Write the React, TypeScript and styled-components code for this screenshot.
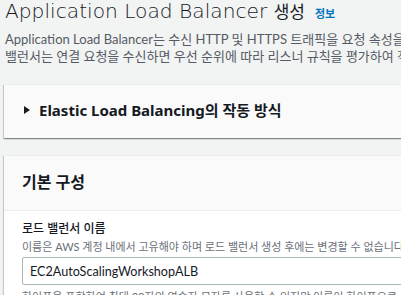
import React from "react";
import styled, { createGlobalStyle } from "styled-components";

const GlobalStyle = createGlobalStyle`
  html, body {
    margin: 0;
    padding: 0;
    background: #f2f3f3;
    overflow: hidden;
  }
  body {
    font-family: "Noto Sans", "Noto Sans CJK KR", sans-serif;
    color: #16191f;
  }
`;

const Page = styled.div`
  width: 760px;
  padding: 0 0 0 4px;
`;

const Header = styled.div`
  padding: 0 0 0 1px;
`;

const TitleRow = styled.div`
  display: flex;
  align-items: baseline;
  gap: 10px;
  height: 26px;
  margin-top: -2px;
  margin-bottom: 7px;
`;

const Title = styled.h1`
  margin: 0;
  font-family: "DejaVu Sans", "Noto Sans CJK KR", sans-serif;
  font-size: 20.2px;
  font-weight: 200;
  line-height: 26px;
  color: #16191f;
  white-space: nowrap;
`;

const TitleKo = styled.span`
  font-family: "Noto Sans CJK KR", sans-serif;
  font-size: 17px;
  font-weight: 400;
`;

const InfoLink = styled.a`
  font-size: 11px;
  font-weight: 700;
  color: #0073bb;
  text-decoration: none;
`;

const Desc = styled.p`
  margin: 0;
  font-family: Lato, "Noto Sans CJK KR", sans-serif;
  font-size: 13px;
  line-height: 17px;
  color: #545b64;
  white-space: nowrap;
`;

const Card = styled.section<{ $flat?: boolean }>`
  background: ${(p) => (p.$flat ? "#fafafa" : "#ffffff")};
  box-shadow: 0 1px 1px 0 rgba(0, 28, 36, 0.3), 1px 1px 1px 0 rgba(0, 28, 36, 0.15),
    -1px 1px 1px 0 rgba(0, 28, 36, 0.15);
  border-top: 1px solid #eaeded;
`;

const Gap = styled.div<{ $h: number }>`
  height: ${(p) => p.$h}px;
`;

const Expander = styled.div`
  display: flex;
  align-items: center;
  gap: 8px;
  height: 49px;
  padding: 0 0 4px 18px;
  font-size: 15px;
  font-weight: 700;
  color: #16191f;
`;

const Caret = styled.span`
  width: 0;
  height: 0;
  border-top: 4px solid transparent;
  border-bottom: 4px solid transparent;
  border-left: 6px solid #16191f;
  margin: 0 1px 0 2px;
`;

const CardHead = styled.div`
  background: #fafafa;
  border-bottom: 1px solid #eaeded;
  height: 50px;
  padding: 0 0 4px 18px;
  display: flex;
  align-items: center;
`;

const CardTitle = styled.h2`
  margin: 0;
  font-size: 16px;
  font-weight: 700;
  color: #16191f;
`;

const CardBody = styled.div`
  padding: 9px 18px 20px;
`;

const Label = styled.div`
  font-size: 12px;
  line-height: 18px;
  font-weight: 500;
  color: #16191f;
  margin-bottom: 1px;
`;

const Hint = styled.div`
  font-family: Lato, "Noto Sans CJK KR", sans-serif;
  font-size: 11px;
  line-height: 16px;
  color: #687078;
  white-space: nowrap;
`;

const Input = styled.div`
  margin: 2px 0 4px;
  height: 26px;
  border: 1px solid #aab7b8;
  border-radius: 2px;
  background: #fff;
  display: flex;
  align-items: center;
  padding-left: 7px;
  font-family: Lato, "Noto Sans", sans-serif;
  font-size: 12.6px;
  color: #16191f;
`;

export default function App() {
  return (
    <>
      <GlobalStyle />
      <Page>
        <Header>
          <TitleRow>
            <Title>
              Application Load Balancer <TitleKo>생성</TitleKo>
            </Title>
            <InfoLink>정보</InfoLink>
          </TitleRow>
          <Desc>
            Application Load Balancer는 수신 HTTP 및 HTTPS 트래픽을 요청 속성을 기반으로 라우팅합니다. 로드
          </Desc>
          <Desc>
            밸런서는 연결 요청을 수신하면 우선 순위에 따라 리스너 규칙을 평가하여 적용할 규칙을 결정한 다음
          </Desc>
        </Header>
        <Gap $h={19} />
        <Card $flat>
          <Expander>
            <Caret />
            Elastic Load Balancing의 작동 방식
          </Expander>
        </Card>
        <Gap $h={17} />
        <Card>
          <CardHead>
            <CardTitle>기본 구성</CardTitle>
          </CardHead>
          <CardBody>
            <Label>로드 밸런서 이름</Label>
            <Hint>이름은 AWS 계정 내에서 고유해야 하며 로드 밸런서 생성 후에는 변경할 수 없습니다.</Hint>
            <Input>EC2AutoScalingWorkshopALB</Input>
            <Hint>하이픈을 포함하여 최대 32자의 영숫자 문자를 사용할 수 있지만 이름이 하이픈으로 시작하거나 끝나서는 안 됩니다.</Hint>
          </CardBody>
        </Card>
      </Page>
    </>
  );
}
